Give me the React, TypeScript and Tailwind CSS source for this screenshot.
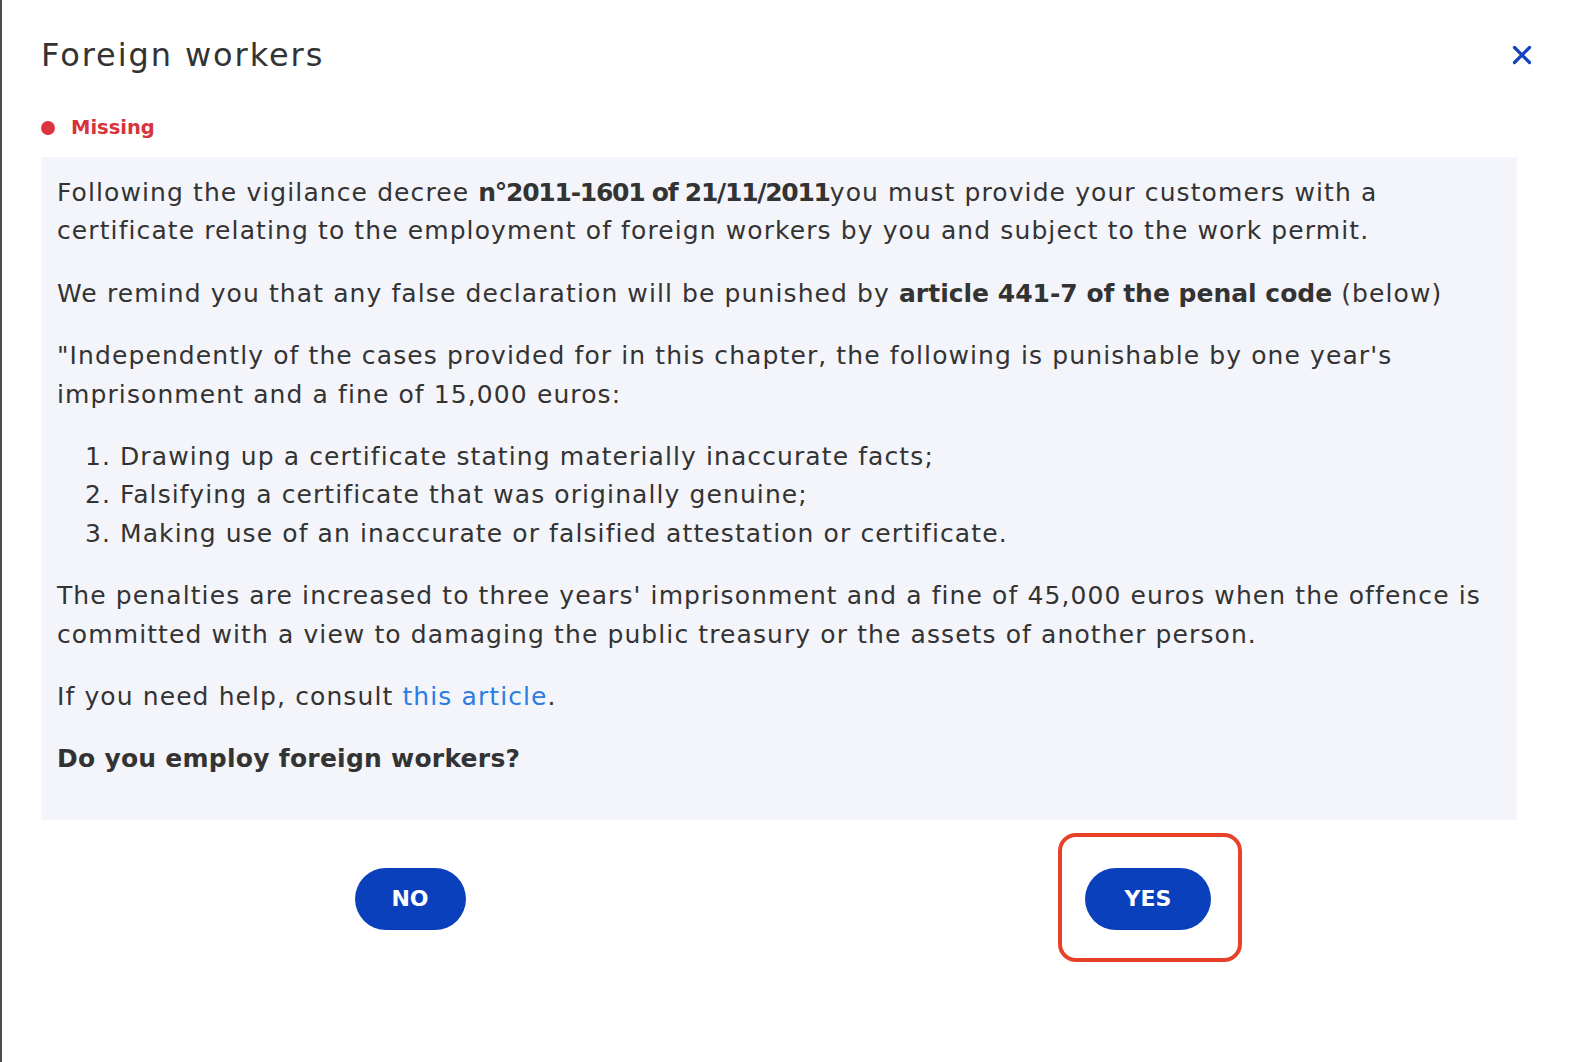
import { X } from "lucide-react";

export default function App() {
  return (
    <div className="min-h-screen w-full border-l-2 border-[#4d4d4d] bg-white font-['DejaVu_Sans',sans-serif] text-[#333333]">
      <div className="pl-[39px] pr-[63px]">
        <div className="flex items-center justify-between pt-[35px]">
          <h1 className="text-[32px] leading-[40px] font-normal tracking-[0.06em]">Foreign workers</h1>
          <button className="-mr-[20px] grid h-[30px] w-[30px] place-items-center text-[#1543c0]" aria-label="Close">
            <X size={30} strokeWidth={2.6} />
          </button>
        </div>

        <div className="mt-[39px] flex items-center gap-4">
          <span className="h-[14px] w-[14px] rounded-full bg-[#dc343d]" />
          <span className="text-[19.5px] leading-[28px] font-semibold text-[#d6333c]">Missing</span>
        </div>

        <div className="mt-[15px] bg-[#f4f5fa] p-4 pt-[17px] pb-[17px] text-[25px] leading-[38.4px] tracking-[0.044em]">
          <p className="mb-6">
            Following the vigilance decree{" "}
            <strong className="font-semibold tracking-[-0.05em]">n°2011-1601 of 21/11/2011</strong>you must provide your customers with a
            <br />
            certificate relating to the employment of foreign workers by you and subject to the work permit.
          </p>
          <p className="mb-6">
            We remind you that any false declaration will be punished by{" "}
            <strong className="font-semibold tracking-normal">article 441-7 of the penal code</strong> (below)
          </p>
          <p className="mb-6">
            "Independently of the cases provided for in this chapter, the following is punishable by one year's
            <br />
            imprisonment and a fine of 15,000 euros:
          </p>
          <ol className="mb-6 list-decimal pl-[63px]">
            <li>Drawing up a certificate stating materially inaccurate facts;</li>
            <li>Falsifying a certificate that was originally genuine;</li>
            <li>Making use of an inaccurate or falsified attestation or certificate.</li>
          </ol>
          <p className="mb-6">
            The penalties are increased to three years' imprisonment and a fine of 45,000 euros when the offence is
            <br />
            committed with a view to damaging the public treasury or the assets of another person.
          </p>
          <p className="mb-6">
            If you need help, consult <a href="#" className="text-[#2b7de3]">this article</a>.
          </p>
          <p className="mb-6 font-semibold tracking-[0.01em]">Do you employ foreign workers?</p>
        </div>

        <div className="mt-12 grid grid-cols-2">
          <div className="flex justify-center">
            <button className="h-[62px] w-[111px] rounded-full bg-[#0b40bd] text-[22px] font-bold text-white">NO</button>
          </div>
          <div className="flex justify-center">
            <div className="relative">
              <button className="h-[62px] w-[126px] rounded-full bg-[#0b40bd] text-[22px] font-bold text-white">YES</button>
              <span className="pointer-events-none absolute -top-[35px] -right-[31px] -bottom-[32px] -left-[27px] rounded-[18px] border-4 border-[#e8412a]" />
            </div>
          </div>
        </div>
      </div>
    </div>
  );
}
